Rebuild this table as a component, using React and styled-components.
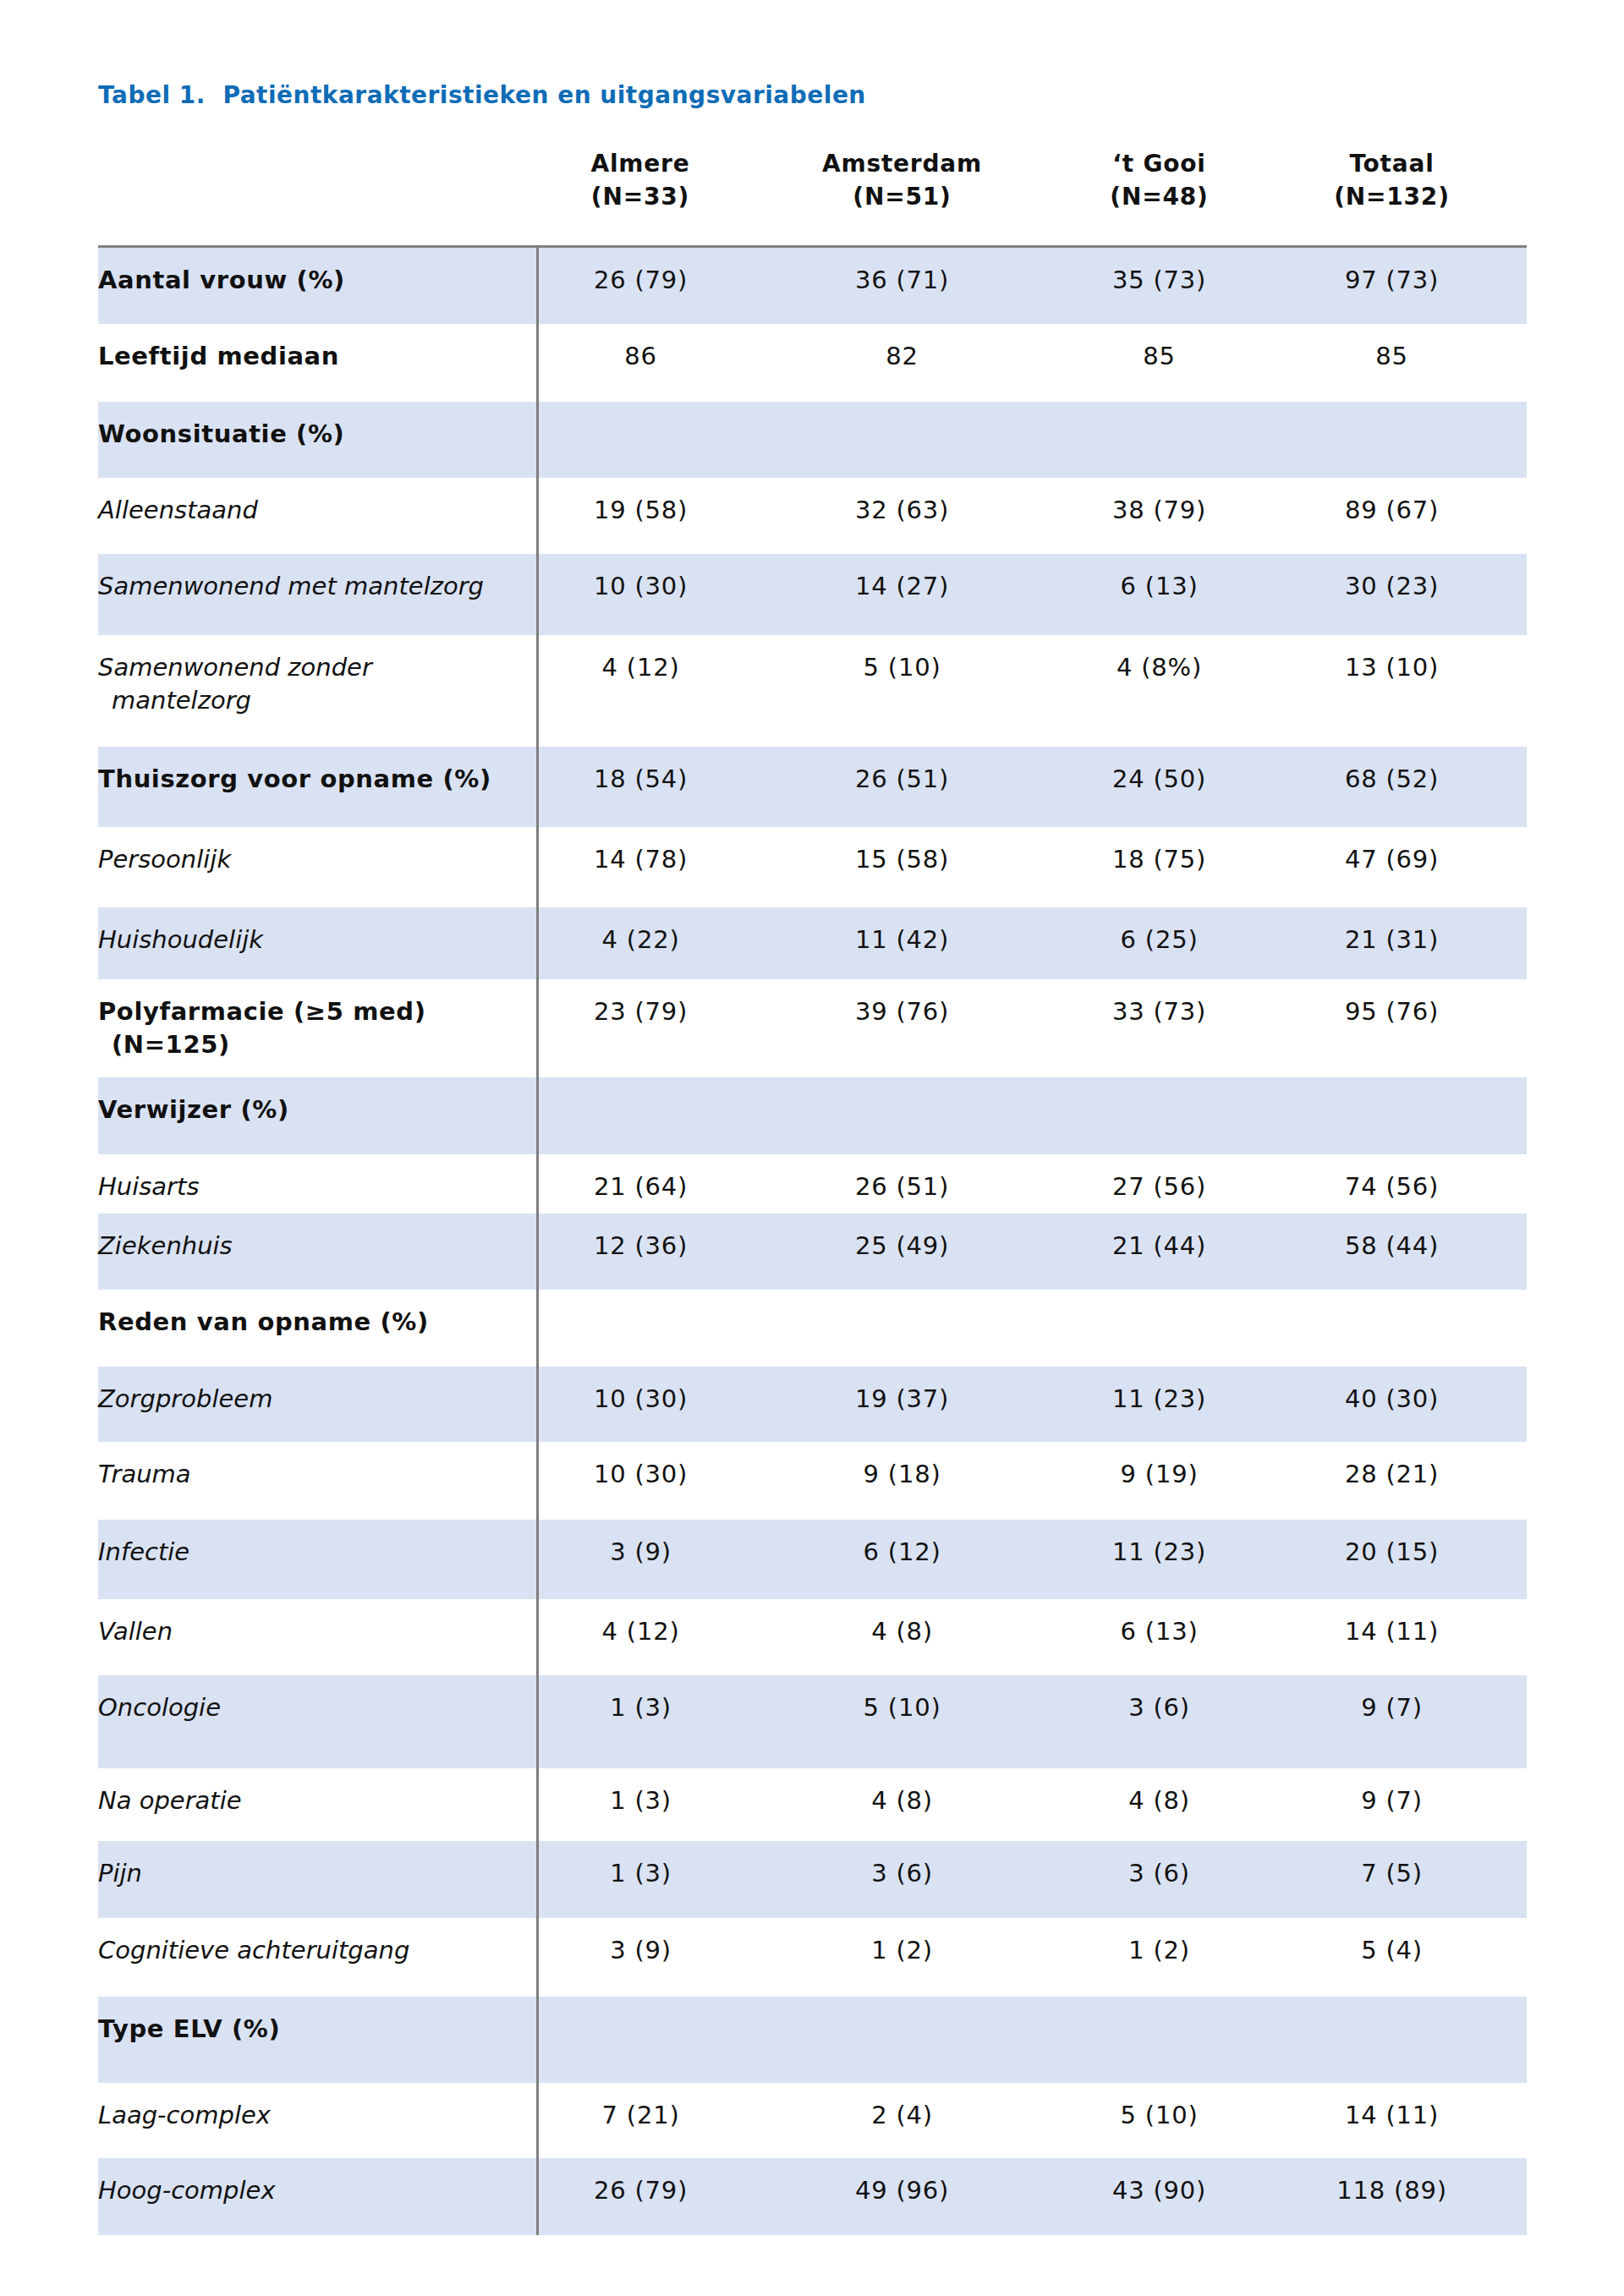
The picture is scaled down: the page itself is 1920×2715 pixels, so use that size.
import styled, { createGlobalStyle } from 'styled-components';

const GlobalStyle = createGlobalStyle`
	html, body {
		margin: 0;
		padding: 0;
		background: #ffffff;
	}
	body {
		font-family: 'DejaVu Sans', Verdana, sans-serif;
		color: #111111;
	}
`;

const Page = styled.main`
	width: 1920px;
	min-height: 2715px;
	box-sizing: border-box;
	padding: 93px 0 0 116px;
	font-size: 29px;
	line-height: 39px;
`;

const Title = styled.h1`
	margin: 0;
	font-size: 28px;
	line-height: 39px;
	font-weight: bold;
	color: #0f6cb6;
	letter-spacing: 0.5px;
	white-space: pre;
`;

const columns = '520px 276px 343px 265px 285px';

const HeadRow = styled.div`
	display: grid;
	grid-template-columns: ${columns};
	margin-top: 42px;
	padding-bottom: 38px;
	font-size: 28px;
`;

const HeadCell = styled.div`
	display: flex;
	flex-direction: column;
	align-items: center;
	padding-right: 34px;
	font-weight: bold;
	letter-spacing: 0.8px;
`;

const Body = styled.div`
	width: 1689px;
	border-top: 3px solid #7f7f7f;
`;

const Row = styled.div`
	display: grid;
	grid-template-columns: ${columns};
	height: ${(p) => p.$h}px;
	background: ${(p) => (p.$shade ? '#d9e2f3' : '#ffffff')};
`;

const Label = styled.div`
	padding-top: 19px;
	font-weight: ${(p) => (p.$bold ? 'bold' : 'normal')};
	font-style: ${(p) => (p.$bold ? 'normal' : 'italic')};
	letter-spacing: ${(p) => (p.$bold ? '0.6px' : '0')};
`;

const Indent = styled.span`
	display: block;
	padding-left: 16px;
`;

const Value = styled.div`
	padding: 19px 34px 0 0;
	text-align: center;
	letter-spacing: 0.8px;
	border-left: ${(p) => (p.$first ? '3px solid #7f7f7f' : 'none')};
	margin-left: ${(p) => (p.$first ? '-2px' : '0')};
`;

const rows = [
	{ label: 'Aantal vrouw (%)', bold: true, h: 90, v: ['26 (79)', '36 (71)', '35 (73)', '97 (73)'] },
	{ label: 'Leeftijd mediaan', bold: true, h: 92, v: ['86', '82', '85', '85'] },
	{ label: 'Woonsituatie (%)', bold: true, h: 90, v: ['', '', '', ''] },
	{ label: 'Alleenstaand', h: 90, v: ['19 (58)', '32 (63)', '38 (79)', '89 (67)'] },
	{ label: 'Samenwonend met mantelzorg', h: 96, v: ['10 (30)', '14 (27)', '6 (13)', '30 (23)'] },
	{ label: 'Samenwonend zonder', cont: 'mantelzorg', h: 132, v: ['4 (12)', '5 (10)', '4 (8%)', '13 (10)'] },
	{ label: 'Thuiszorg voor opname (%)', bold: true, h: 95, v: ['18 (54)', '26 (51)', '24 (50)', '68 (52)'] },
	{ label: 'Persoonlijk', h: 95, v: ['14 (78)', '15 (58)', '18 (75)', '47 (69)'] },
	{ label: 'Huishoudelijk', h: 85, v: ['4 (22)', '11 (42)', '6 (25)', '21 (31)'] },
	{ label: 'Polyfarmacie (≥5 med)', cont: '(N=125)', bold: true, h: 116, v: ['23 (79)', '39 (76)', '33 (73)', '95 (76)'] },
	{ label: 'Verwijzer (%)', bold: true, h: 91, v: ['', '', '', ''] },
	{ label: 'Huisarts', h: 70, v: ['21 (64)', '26 (51)', '27 (56)', '74 (56)'] },
	{ label: 'Ziekenhuis', h: 90, v: ['12 (36)', '25 (49)', '21 (44)', '58 (44)'] },
	{ label: 'Reden van opname (%)', bold: true, h: 91, v: ['', '', '', ''] },
	{ label: 'Zorgprobleem', h: 89, v: ['10 (30)', '19 (37)', '11 (23)', '40 (30)'] },
	{ label: 'Trauma', h: 92, v: ['10 (30)', '9 (18)', '9 (19)', '28 (21)'] },
	{ label: 'Infectie', h: 94, v: ['3 (9)', '6 (12)', '11 (23)', '20 (15)'] },
	{ label: 'Vallen', h: 90, v: ['4 (12)', '4 (8)', '6 (13)', '14 (11)'] },
	{ label: 'Oncologie', h: 110, v: ['1 (3)', '5 (10)', '3 (6)', '9 (7)'] },
	{ label: 'Na operatie', h: 86, v: ['1 (3)', '4 (8)', '4 (8)', '9 (7)'] },
	{ label: 'Pijn', h: 91, v: ['1 (3)', '3 (6)', '3 (6)', '7 (5)'] },
	{ label: 'Cognitieve achteruitgang', h: 93, v: ['3 (9)', '1 (2)', '1 (2)', '5 (4)'] },
	{ label: 'Type ELV (%)', bold: true, h: 102, v: ['', '', '', ''] },
	{ label: 'Laag-complex', h: 89, v: ['7 (21)', '2 (4)', '5 (10)', '14 (11)'] },
	{ label: 'Hoog-complex', h: 91, v: ['26 (79)', '49 (96)', '43 (90)', '118 (89)'] },
];

const heads = [
	['Almere', '(N=33)'],
	['Amsterdam', '(N=51)'],
	['‘t Gooi', '(N=48)'],
	['Totaal', '(N=132)'],
];

const App = () => {
	return (
		<>
			<GlobalStyle />
			<Page>
				<Title>{'Tabel 1.  Patiëntkarakteristieken en uitgangsvariabelen'}</Title>
				<HeadRow>
					<div />
					{heads.map(([name, n]) => (
						<HeadCell key={name}>
							<span>{name}</span>
							<span>{n}</span>
						</HeadCell>
					))}
				</HeadRow>
				<Body>
					{rows.map((r, i) => (
						<Row key={r.label} $h={r.h} $shade={i % 2 === 0}>
							<Label $bold={r.bold}>
								{r.label}
								{r.cont && <Indent>{r.cont}</Indent>}
							</Label>
							{r.v.map((val, j) => (
								<Value key={j} $first={j === 0}>
									{val}
								</Value>
							))}
						</Row>
					))}
				</Body>
			</Page>
		</>
	);
};

export default App;
